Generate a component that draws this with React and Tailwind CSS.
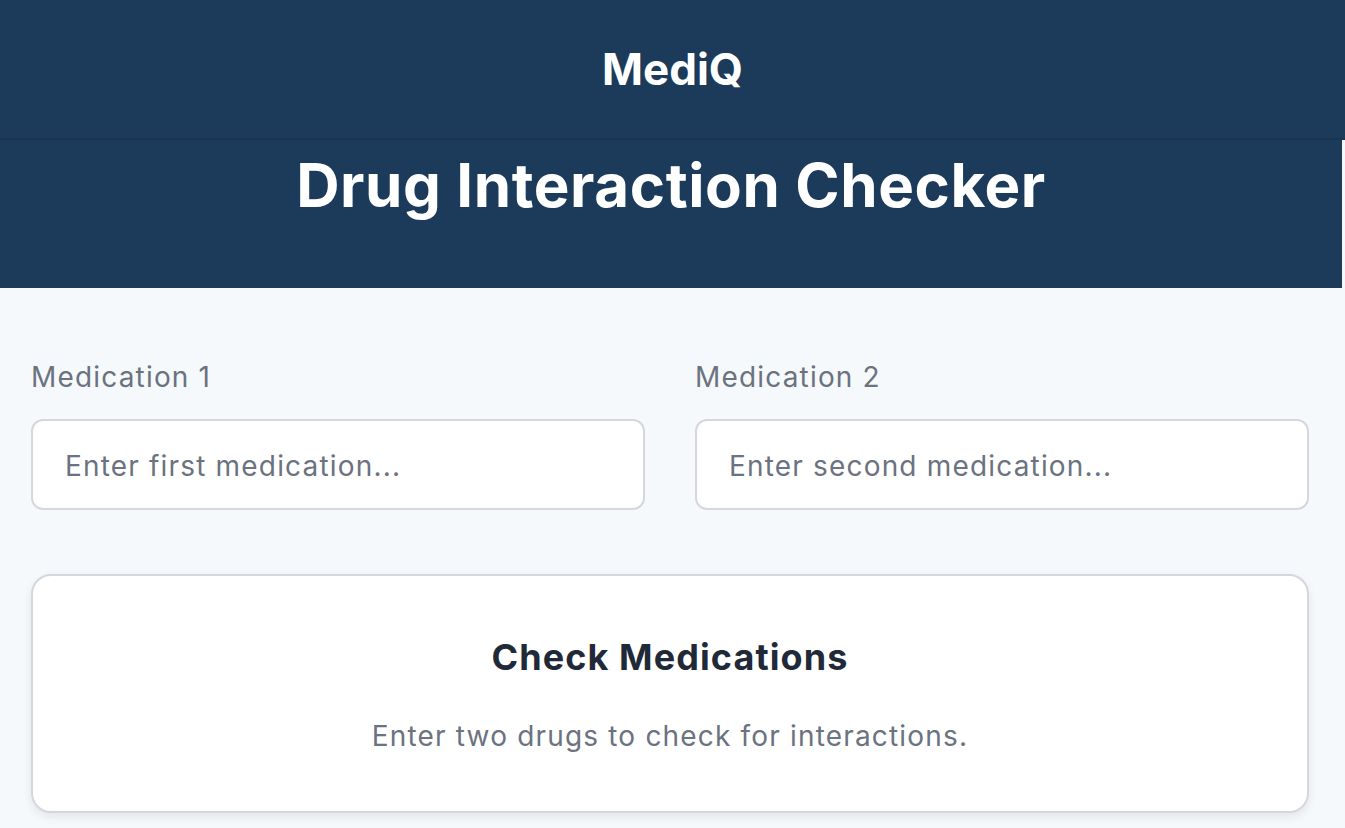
export default function App() {
  return (
    <div
      className="min-h-screen bg-[#f6f9fb]"
      style={{ fontFamily: 'Inter, "Noto Sans", sans-serif' }}
    >
      {/* Top nav */}
      <header className="h-[140px] flex items-center justify-center bg-[#1c3a5a] border-b-2 border-[#1a3551]">
        <span className="text-white font-bold text-[44px] leading-none">MediQ</span>
      </header>

      {/* Hero */}
      <section className="h-[148px] mr-[3px] bg-[#1c3a5a] flex justify-center pt-[9px]">
        <h1 className="text-white font-bold text-[60px] leading-[72px] tracking-[0.01em]">
          Drug Interaction Checker
        </h1>
      </section>

      <main className="pl-[31px] pr-[36px] pt-[69px] pb-4">
        <div className="grid grid-cols-2 gap-[50px]">
          <div>
            <label className="block text-[28px] leading-[40px] tracking-[0.042em] text-[#6b7280]">Medication 1</label>
            <input
              className="mt-[22px] w-full h-[91px] rounded-[12px] border-2 border-[#d4d7de] bg-white px-[32px] pt-[3px] text-[28px] tracking-[0.042em] text-[#374151] placeholder:text-[#6b7280] outline-none"
              placeholder="Enter first medication..."
            />
          </div>
          <div>
            <label className="block text-[28px] leading-[40px] tracking-[0.042em] text-[#6b7280]">Medication 2</label>
            <input
              className="mt-[22px] w-full h-[91px] rounded-[12px] border-2 border-[#d4d7de] bg-white px-[32px] pt-[3px] text-[28px] tracking-[0.042em] text-[#374151] placeholder:text-[#6b7280] outline-none"
              placeholder="Enter second medication..."
            />
          </div>
        </div>

        <div className="mt-[64px] rounded-[20px] border-2 border-[#d4d7de] bg-white shadow-[0_4px_10px_rgba(0,0,0,0.08)] pt-[59px] pb-[55px] text-center">
          <h2 className="text-[36px] leading-[44px] font-bold tracking-[0.03em] text-[#1f2937]">Check Medications</h2>
          <p className="mt-[37px] text-[28px] leading-[40px] tracking-[0.042em] text-[#6b7280]">
            Enter two drugs to check for interactions.
          </p>
        </div>
      </main>
    </div>
  )
}
